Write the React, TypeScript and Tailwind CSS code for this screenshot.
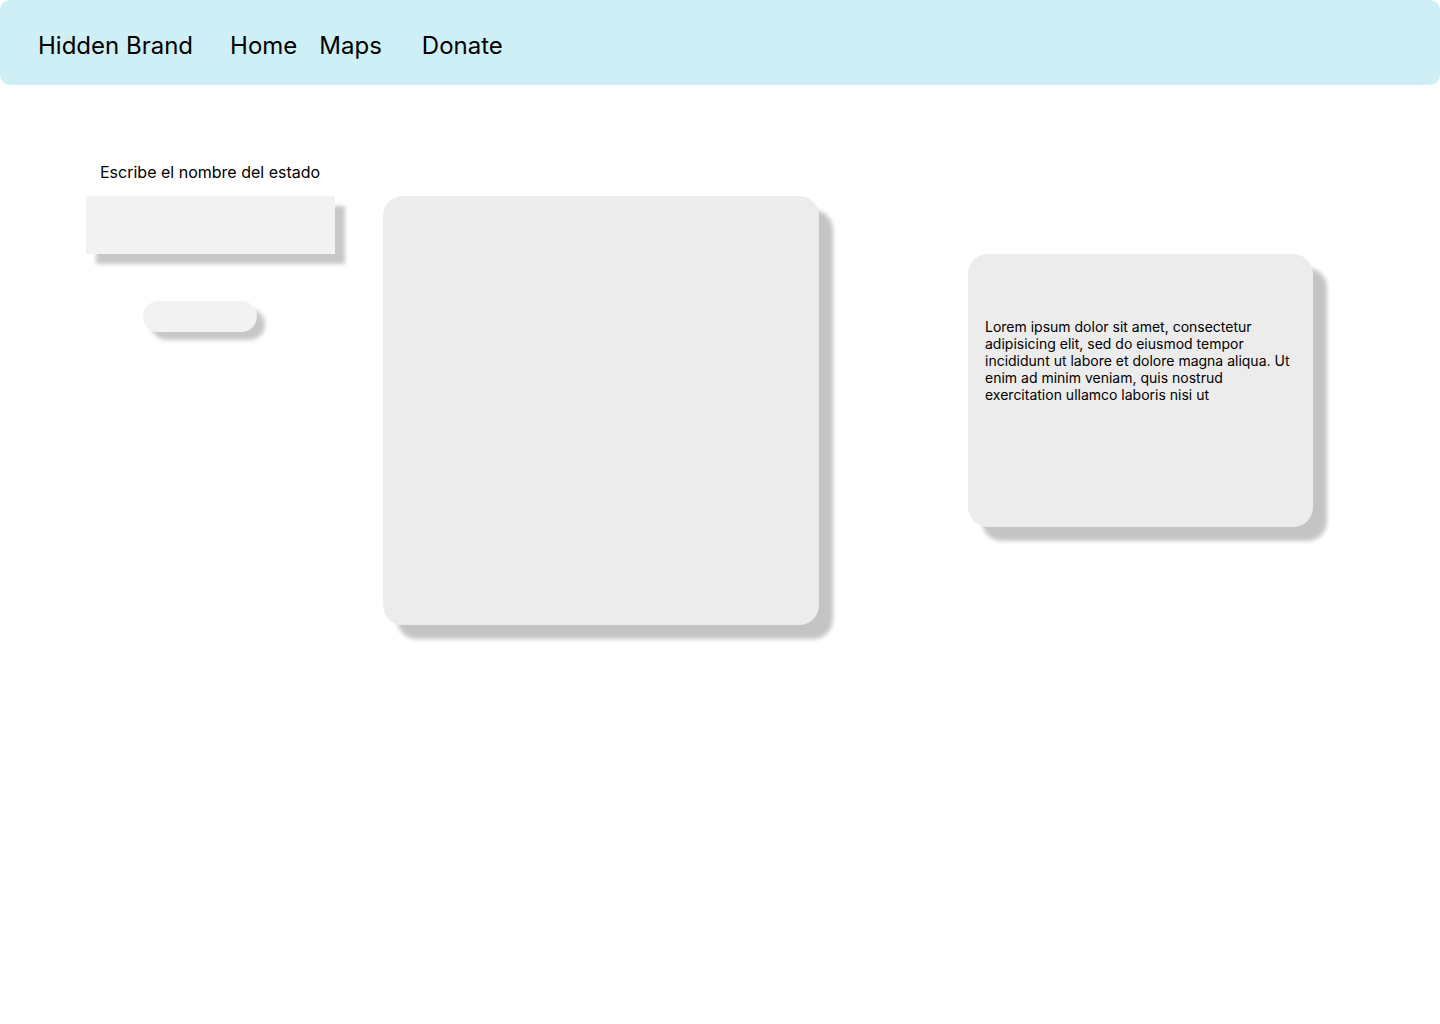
export default function App() {
  return (
    <div className="min-h-[1024px] bg-white text-black" style={{ fontFamily: "Inter, 'Noto Sans', sans-serif" }}>
      {/* Top bar */}
      <nav className="flex h-[85px] items-center rounded-[10px] bg-[#cfeff6] pl-[38px] pt-[6px] text-[24px]">
        <span>Hidden Brand</span>
        <a className="ml-[37px]">Home</a>
        <a className="ml-[22px]">Maps</a>
        <a className="ml-[40px]">Donate</a>
      </nav>

      <main className="flex items-start pl-[86px] pt-[75px]">
        {/* Search column */}
        <div className="flex w-[249px] flex-col">
          <label className="pl-[14px] text-[16px] leading-6">Escribe el nombre del estado</label>
          <input
            type="text"
            className="mt-3 h-[58px] w-[249px] bg-[#f2f2f2] shadow-[10px_10px_4px_rgba(0,0,0,0.22)] outline-none"
          />
          <button className="ml-[57px] mt-[47px] h-[31px] w-[114px] rounded-full bg-[#f2f2f2] shadow-[8px_8px_4px_rgba(0,0,0,0.22)]" />
        </div>

        {/* Map */}
        <div className="ml-[48px] mt-[36px] h-[429px] w-[436px] rounded-[20px] bg-[#ececec] shadow-[14px_14px_4px_rgba(0,0,0,0.23)]" />

        {/* Info card */}
        <div className="ml-[149px] mt-[94px] h-[273px] w-[345px] rounded-[20px] bg-[#ececec] px-[17px] pt-[64px] shadow-[14px_14px_4px_rgba(0,0,0,0.23)]">
          <p className="text-[14px] leading-[17px]">
            Lorem ipsum dolor sit amet, consectetur adipisicing elit, sed do eiusmod tempor incididunt ut labore et dolore
            magna aliqua. Ut enim ad minim veniam, quis nostrud exercitation ullamco laboris nisi ut
          </p>
        </div>
      </main>
    </div>
  )
}
